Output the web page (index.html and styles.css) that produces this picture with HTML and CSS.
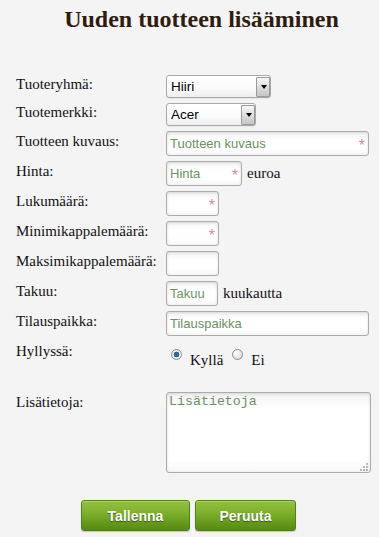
FILE: index.html
```html
<!DOCTYPE html>
<html lang="fi">
<head>
<meta charset="utf-8">
<title>Uuden tuotteen lisääminen</title>
<link rel="stylesheet" href="styles.css">
</head>
<body>
<h1 class="title">Uuden tuotteen lisääminen</h1>
<form class="form">
  <label class="lbl lbl-sel">Tuoteryhmä:</label>
  <div class="field">
    <span class="select-wrap w-group"><select class="sel"><option>Hiiri</option></select></span>
  </div>

  <label class="lbl lbl-sel">Tuotemerkki:</label>
  <div class="field">
    <span class="select-wrap w-brand"><select class="sel"><option>Acer</option></select></span>
  </div>

  <label class="lbl">Tuotteen kuvaus:</label>
  <div class="field">
    <span class="req"><input class="inp w-wide" type="text" placeholder="Tuotteen kuvaus"></span>
  </div>

  <label class="lbl">Hinta:</label>
  <div class="field inline">
    <span class="req"><input class="inp w-price" type="text" placeholder="Hinta"></span>
    <span class="unit">euroa</span>
  </div>

  <label class="lbl">Lukumäärä:</label>
  <div class="field">
    <span class="req"><input class="inp w-small" type="text"></span>
  </div>

  <label class="lbl">Minimikappalemäärä:</label>
  <div class="field">
    <span class="req"><input class="inp w-small" type="text"></span>
  </div>

  <label class="lbl">Maksimikappalemäärä:</label>
  <div class="field">
    <input class="inp w-small" type="text">
  </div>

  <label class="lbl">Takuu:</label>
  <div class="field inline">
    <input class="inp w-takuu" type="text" placeholder="Takuu">
    <span class="unit">kuukautta</span>
  </div>

  <label class="lbl">Tilauspaikka:</label>
  <div class="field">
    <input class="inp w-wide" type="text" placeholder="Tilauspaikka">
  </div>

  <label class="lbl">Hyllyssä:</label>
  <div class="field radios">
    <input class="radio" type="radio" name="hylly" checked>
    <span class="rlabel">Kyllä</span>
    <input class="radio" type="radio" name="hylly">
    <span class="rlabel">Ei</span>
  </div>

  <label class="lbl">Lisätietoja:</label>
  <div class="field">
    <span class="ta-wrap">
      <textarea class="ta" placeholder="Lisätietoja"></textarea>
      <svg class="grip" width="9" height="9" viewBox="0 0 9 9" aria-hidden="true">
        <rect x="7" y="1" width="2" height="2" fill="#b8b8b8"/>
        <rect x="4" y="4" width="2" height="2" fill="#b8b8b8"/>
        <rect x="7" y="4" width="2" height="2" fill="#b8b8b8"/>
        <rect x="1" y="7" width="2" height="2" fill="#b8b8b8"/>
        <rect x="4" y="7" width="2" height="2" fill="#b8b8b8"/>
        <rect x="7" y="7" width="2" height="2" fill="#b8b8b8"/>
      </svg>
    </span>
  </div>
</form>
<div class="buttons">
  <button class="btn btn-save" type="button">Tallenna</button>
  <button class="btn btn-cancel" type="button">Peruuta</button>
</div>
</body>
</html>
```

FILE: styles.css
```css
html, body {
  margin: 0;
  padding: 0;
}
body {
  background: #f4f4f4;
  font-family: "Liberation Serif", "Times New Roman", Times, serif;
  color: #111;
  width: 379px;
  height: 537px;
  overflow: hidden;
}
.title {
  margin: 0;
  padding: 6px 0 0 24px;
  font-family: "Liberation Serif", "Times New Roman", Times, serif;
  font-size: 24px;
  line-height: 27px;
  font-weight: bold;
  text-align: center;
  color: #2e1d0f;
}
.form {
  display: grid;
  grid-template-columns: 150px 1fr;
  row-gap: 5px;
  padding-left: 16px;
  margin-top: 42px;
  align-items: start;
}
.lbl {
  font-family: "Liberation Serif", "Times New Roman", Times, serif;
  font-size: 15px;
  line-height: 17px;
  padding-top: 2px;
}
.lbl-sel {
  padding-top: 1px;
}
.field {
  display: flex;
  align-items: flex-start;
}
.field.inline {
  align-items: baseline;
  gap: 5px;
}
.unit {
  font-family: "Liberation Serif", "Times New Roman", Times, serif;
  font-size: 15px;
}

/* select */
.select-wrap {
  position: relative;
  display: inline-block;
  height: 23px;
}
.w-group { width: 105px; }
.w-brand { width: 90px; }
.sel {
  appearance: none;
  -webkit-appearance: none;
  box-sizing: border-box;
  width: 100%;
  height: 100%;
  margin: 0;
  padding: 0 0 0 4px;
  border: 1px solid #a8a8a8;
  border-radius: 3px;
  background: linear-gradient(#ffffff, #fbfbfb 60%, #eeeeee);
  box-shadow: 0 1px 1px rgba(0,0,0,0.06);
  font-family: "Liberation Sans", Arial, sans-serif;
  font-size: 13.5px;
  color: #000;
}
.select-wrap::after {
  content: "";
  position: absolute;
  right: 1px;
  top: 2px;
  bottom: 1px;
  width: 14px;
  border: 1px solid #9a9a9a;
  border-radius: 1px;
  background: linear-gradient(#f7f7f7, #dcdcdc 55%, #c6c6c6);
  box-sizing: border-box;
}
.select-wrap::before {
  content: "";
  position: absolute;
  right: 4.5px;
  top: 10px;
  width: 0;
  height: 0;
  border-left: 3.5px solid transparent;
  border-right: 3.5px solid transparent;
  border-top: 4px solid #000;
  z-index: 1;
}

/* text inputs */
.inp {
  box-sizing: border-box;
  height: 25px;
  margin: 0;
  padding: 0 3px;
  border: 1px solid #acacac;
  border-radius: 3px;
  background: linear-gradient(#f4f4f4, #ffffff 35%, #ffffff 70%, #f7f7f7);
  box-shadow: inset 0 1px 3px rgba(0,0,0,0.12), 0 0 1px rgba(0,0,0,0.05);
  font-family: "Liberation Sans", Arial, sans-serif;
  font-size: 13px;
  color: #000;
  outline: none;
}
.inp::placeholder {
  color: #6b9162;
  opacity: 1;
}
.w-wide { width: 203px; }
.w-price { width: 76px; }
.w-small { width: 53px; }
.w-takuu { width: 52px; }

.req {
  position: relative;
  display: inline-block;
}
.req::after {
  content: "*";
  position: absolute;
  right: 4px;
  top: 7px;
  font-family: "Liberation Sans", Arial, sans-serif;
  font-size: 16px;
  line-height: 15px;
  color: #cf8f96;
}

/* radios */
.radios {
  padding: 11px 0 18px 5px;
  align-items: flex-start;
}
.radio {
  appearance: none;
  -webkit-appearance: none;
  width: 11px;
  height: 11px;
  margin: -3px 8px 0 0;
  border: 1px solid #8e8e8e;
  border-radius: 50%;
  background: radial-gradient(circle at 40% 35%, #ffffff, #e6e6e6 60%, #cfcfcf);
  box-sizing: border-box;
}
.radio:checked {
  background: radial-gradient(circle, #1d5f86 0, #2f7fae 1.6px, #184e74 2.6px, #f2f2f2 3.1px, #e2e2e2 100%);
}
.rlabel {
  font-family: "Liberation Serif", "Times New Roman", Times, serif;
  font-size: 15px;
  line-height: 17px;
  margin-right: 9px;
}

/* textarea */
.ta-wrap {
  position: relative;
  display: inline-block;
}
.ta {
  display: block;
  box-sizing: border-box;
  width: 205px;
  height: 81px;
  margin: 0;
  padding: 1px 2px;
  border: 1px solid #acacac;
  border-radius: 3px;
  background: linear-gradient(#f2f2f2, #ffffff 20%, #ffffff 85%, #f6f6f6);
  box-shadow: inset 0 1px 3px rgba(0,0,0,0.12);
  font-family: "Liberation Mono", "Courier New", monospace;
  font-size: 13.3px;
  resize: none;
  outline: none;
}
.ta::placeholder {
  color: #6b9162;
  opacity: 1;
}
.grip {
  position: absolute;
  right: 3px;
  bottom: 2px;
}

/* buttons */
.buttons {
  display: flex;
  justify-content: center;
  gap: 5px;
  margin-top: 27px;
  padding-right: 2px;
}
.btn {
  box-sizing: border-box;
  height: 31px;
  padding: 0;
  border: 1px solid #4f8117;
  border-radius: 3px;
  background: linear-gradient(#93c13f, #7cae2c 45%, #66991d 75%, #558a14);
  box-shadow: inset 0 1px 0 rgba(255,255,255,0.25), 0 1px 1px rgba(0,0,0,0.2);
  font-family: "Liberation Sans", Arial, sans-serif;
  font-size: 14px;
  font-weight: bold;
  color: #fff;
  text-shadow: 0 1px 1px rgba(40,70,10,0.8);
}
.btn-save { width: 109px; }
.btn-cancel { width: 101px; }
```
